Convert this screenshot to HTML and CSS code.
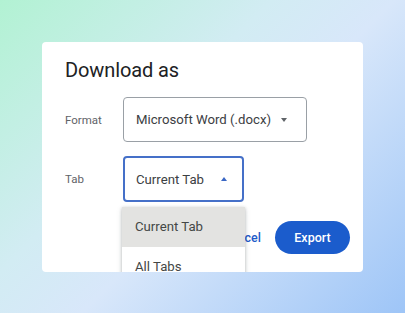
FILE: index.html
```html
<!DOCTYPE html>
<html>
<head>
<meta charset="utf-8">
<link rel="stylesheet" href="styles.css">
</head>
<body>
<div class="card">
  <h1 class="title">Download as</h1>
  <div class="form">
    <div class="label">Format</div>
    <div class="select select-format">
      <span class="value">Microsoft Word (.docx)</span>
      <span class="caret caret-down"></span>
    </div>
    <div class="label">Tab</div>
    <div class="tab-wrap">
      <div class="select select-tab">
        <span class="value">Current Tab</span>
        <span class="caret caret-up"></span>
      </div>
      <ul class="menu">
        <li class="menu-item selected">Current Tab</li>
        <li class="menu-item">All Tabs</li>
      </ul>
    </div>
  </div>
  <div class="actions">
    <button class="btn btn-text">Cancel</button>
    <button class="btn btn-primary">Export</button>
  </div>
</div>
</body>
</html>
```

FILE: styles.css
```css
html, body {
  margin: 0;
  padding: 0;
}
body {
  width: 405px;
  height: 313px;
  box-sizing: border-box;
  padding: 42px 0 0 42px;
  background: linear-gradient(135deg, #b2f2d3 0%, #d2ecf3 38%, #d8e7fa 55%, #9ec5f7 100%);
  font-family: Roboto, "Liberation Sans", sans-serif;
  overflow: hidden;
}
.card {
  width: 321px;
  height: 230px;
  box-sizing: border-box;
  background: #ffffff;
  border-radius: 4px;
  padding: 16px 13px 0 23px;
  overflow: hidden;
  display: flex;
  flex-direction: column;
}
.title {
  margin: 0;
  font-size: 20px;
  line-height: 24px;
  font-weight: 400;
  color: #202124;
  letter-spacing: -0.1px;
}
.form {
  margin-top: 15px;
  display: grid;
  grid-template-columns: 58px auto;
  row-gap: 14px;
  align-items: center;
  justify-items: start;
}
.label {
  font-size: 11.5px;
  color: #5f6368;
}
.select {
  box-sizing: border-box;
  display: flex;
  align-items: center;
  border-radius: 4px;
  padding: 0 12px;
  font-size: 13.2px;
  color: #3c4043;
}
.select-format {
  width: 184px;
  height: 45px;
  border: 1px solid #9aa0a6;
  justify-content: space-between;
}
.select-tab {
  width: 121px;
  height: 46px;
  border: 2px solid #4570c8;
  padding: 0 11px;
  justify-content: space-between;
}
.caret {
  width: 0;
  height: 0;
  border-left: 3.5px solid transparent;
  border-right: 3.5px solid transparent;
}
.caret-down {
  border-top: 4px solid #5f6368;
  margin-right: 7px;
}
.caret-up {
  border-bottom: 4px solid #3a67c4;
  margin-right: 4px;
}
.tab-wrap {
  position: relative;
}
.menu {
  position: absolute;
  top: 51px;
  left: -1px;
  width: 123px;
  margin: 0;
  padding: 0;
  list-style: none;
  background: #ffffff;
  box-shadow: 0 1px 3px rgba(60, 64, 67, 0.3), 0 2px 6px rgba(60, 64, 67, 0.15);
  z-index: 2;
}
.menu-item {
  height: 40px;
  line-height: 40px;
  padding: 0 13px;
  font-size: 13.2px;
  color: #444746;
}
.menu-item.selected {
  background: #e3e3e1;
}
.actions {
  margin-top: 19px;
  display: flex;
  justify-content: flex-end;
  align-items: center;
  gap: 14px;
}
.btn {
  font-family: Roboto, "Liberation Sans", sans-serif;
  font-size: 12.5px;
  font-weight: 500;
  border: none;
  cursor: pointer;
}
.btn-text {
  background: transparent;
  color: #1f5bc9;
  padding: 0;
}
.btn-primary {
  width: 75px;
  height: 33px;
  border-radius: 17px;
  background: #1b5ccc;
  color: #ffffff;
}
```
